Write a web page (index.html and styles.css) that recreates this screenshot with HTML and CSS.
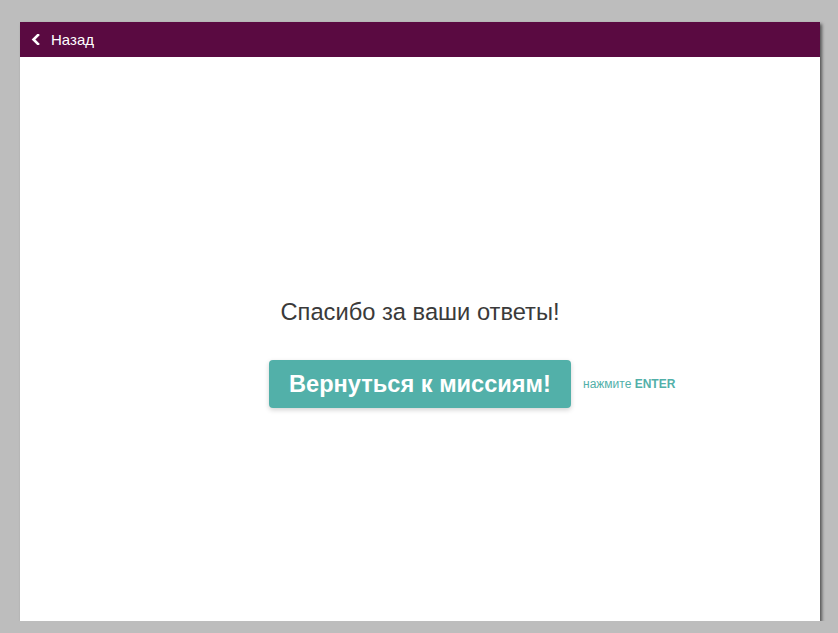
FILE: index.html
```html
<!DOCTYPE html>
<html>
<head>
<meta charset="utf-8">
<meta name="viewport" content="width=device-width, initial-scale=1">
<link rel="stylesheet" href="styles.css">
</head>
<body>

<div class="card">
	<div class="topbar">
		<a class="backLink" href="#">
			<svg class="chevron" width="9" height="11" viewBox="0 0 9 11"><path d="M7 1 L2.5 5.5 L7 10" fill="none" stroke="#fff" stroke-width="2.6" stroke-linecap="square"/></svg>
			<span>Назад</span>
		</a>
	</div>
	<div class="content">
		<p class="thanks">Спасибо за ваши ответы!</p>
		<div class="buttonRow">
			<button class="missionButton">Вернуться к миссиям!</button>
			<span class="hint">нажмите <b>ENTER</b></span>
		</div>
	</div>
</div>

</body>
</html>
```

FILE: styles.css
```css
body {
	background-color: #bdbdbd;
	margin: 0px;
	font-family: 'Liberation Sans', Arial, sans-serif;
}

div.card {
	width: 800px;
	height: 599px;
	margin: 22px 0 0 20px;
	background-color: #ffffff;
	box-shadow: 2px 2px 3px rgba(0,0,0,0.55);
}

div.topbar {
	height: 35px;
	background-color: #5a0a41;
	display: flex;
	align-items: center;
	padding-left: 11px;
}

a.backLink {
	display: flex;
	align-items: center;
	gap: 11px;
	color: #ffffff;
	text-decoration: none;
	font-size: 15px;
}

.chevron {
	display: block;
}

div.content {
	padding-top: 241px;
	text-align: center;
}

p.thanks {
	margin: 0px;
	font-size: 23.7px;
	line-height: 28px;
	color: #3a3a3a;
}

div.buttonRow {
	position: relative;
	display: inline-block;
	margin-top: 34px;
}

.missionButton {
	display: block;
	height: 48px;
	width: 302px;
	padding: 0px;
	border: none;
	border-radius: 4px;
	background-color: #52b0a9;
	color: #ffffff;
	font-family: 'Liberation Sans', Arial, sans-serif;
	font-weight: bold;
	font-size: 23.6px;
	box-shadow: 0 2px 5px rgba(0,0,0,0.18);
}

span.hint {
	position: absolute;
	left: 314px;
	top: 17px;
	white-space: nowrap;
	font-size: 12px;
	color: #52b0a9;
}
```
